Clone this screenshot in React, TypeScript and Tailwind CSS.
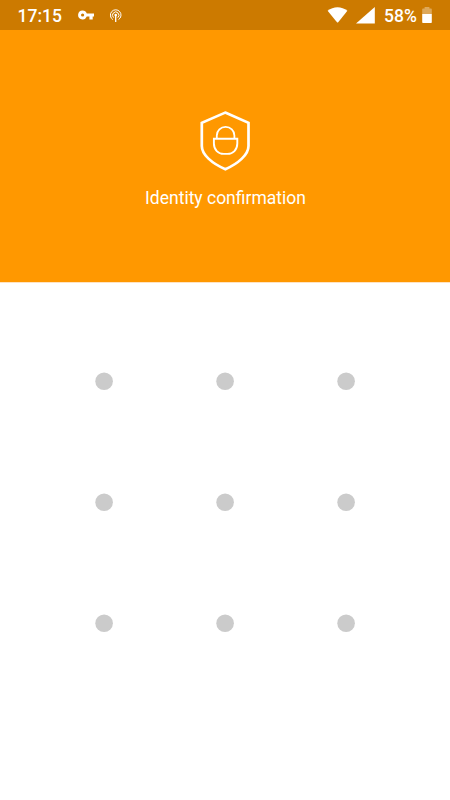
const DOTS = Array.from({ length: 9 }, (_, i) => i)

function KeyIcon() {
  return (
    <svg width="17" height="10" viewBox="0 0 17 10" fill="white">
      <path
        fillRule="evenodd"
        d="M4.6 0.4A4.5 4.5 0 0 1 8.8 3.4H16V6.6H14.7V9.4H11.4V6.6H8.8A4.5 4.5 0 1 1 4.6 0.4ZM4.6 3.4A1.6 1.6 0 1 0 4.6 6.6A1.6 1.6 0 0 0 4.6 3.4Z"
      />
    </svg>
  )
}

function HotspotIcon() {
  return (
    <svg width="12" height="13" viewBox="0 0 12 13" fill="none" stroke="white" strokeWidth="1">
      <path d="M2.9 10.6A5.3 5.3 0 1 1 8.5 10.6" />
      <path d="M3.6 8.6A3.2 3.2 0 1 1 7.8 8.6" />
      <circle cx="5.7" cy="6.1" r="1.3" fill="white" stroke="none" />
      <path d="M5.7 6V12.9" strokeWidth="1.3" />
    </svg>
  )
}

function WifiIcon() {
  return (
    <svg width="20" height="16" viewBox="0 0 20 16" fill="white" className="overflow-visible">
      <path d="M-0.4 3.8C5.4-1.1 13.6-1.1 19.4 3.8L10.2 15.2Q9.6 15.8 9 15.2Z" />
    </svg>
  )
}

function SignalIcon() {
  return (
    <svg width="19" height="17" viewBox="0 0 19 17" fill="white">
      <path d="M18.8 0V16.4H0Z" />
    </svg>
  )
}

function BatteryIcon() {
  return (
    <svg width="10" height="16" viewBox="0 0 10 16" fill="white">
      <path d="M2.6 0H7.4V1.4H9Q9.8 1.4 9.8 2.2V7H0.2V2.2Q0.2 1.4 1 1.4H2.6Z" opacity="0.35" />
      <path d="M0.2 7H9.8V15.2Q9.8 16 9 16H1Q0.2 16 0.2 15.2Z" />
    </svg>
  )
}

function ShieldLockIcon() {
  return (
    <svg width="50" height="60" viewBox="0 0 50 60" fill="none" stroke="white">
      <path
        d="M25.2 1.6L48.5 11.8V35C48.5 43.5 38.5 52.5 25.4 58.2C11.8 52.5 1.8 43.5 1.8 35V11.8Z"
        strokeWidth="2.7"
      />
      <path d="M16.8 27.5V24.5A8.8 8.6 0 0 1 34.4 24.5V27.5" strokeWidth="1.8" />
      <path d="M13.9 27.8H37.3V32.5C37.3 38.8 33 42.9 27.5 42.9H23.7C18.2 42.9 13.9 38.8 13.9 32.5Z" strokeWidth="1.9" />
    </svg>
  )
}

export default function App() {
  return (
    <div className="h-[800px] w-[450px] overflow-hidden bg-white font-['Roboto',sans-serif]">
      {/* Status bar */}
      <div className="flex h-[30px] items-center bg-[#cc7a00] text-[17.5px] font-medium leading-none text-white">
        <span className="ml-[17.5px] mt-[3px] w-[60px]">17:15</span>
        <KeyIcon />
        <div className="ml-[15px]">
          <HotspotIcon />
        </div>
        <div className="ml-auto mr-[18px] flex items-center">
          <div className="mr-2">
            <WifiIcon />
          </div>
          <SignalIcon />
          <span className="ml-[9px] mt-[3px] w-[38px]">58%</span>
          <BatteryIcon />
        </div>
      </div>

      {/* Header */}
      <div className="flex h-[253px] flex-col items-center border-b border-[#ffe3c2] bg-[#ff9800] pt-[81px]">
        <ShieldLockIcon />
        <h1 className="mt-[15px] pl-px text-[17.5px] leading-6 text-white">Identity confirmation</h1>
      </div>

      {/* Pattern grid */}
      <div className="mx-auto mt-[38.1px] grid w-[362px] grid-cols-3">
        {DOTS.map((dot) => (
          <div key={dot} className="flex h-[120.6px] items-center justify-center">
            <svg width="18" height="18" viewBox="0 0 18 18" className="overflow-visible">
              <circle cx="9.1" cy="9.2" r="8.8" fill="#cbcbcb" />
            </svg>
          </div>
        ))}
      </div>
    </div>
  )
}
